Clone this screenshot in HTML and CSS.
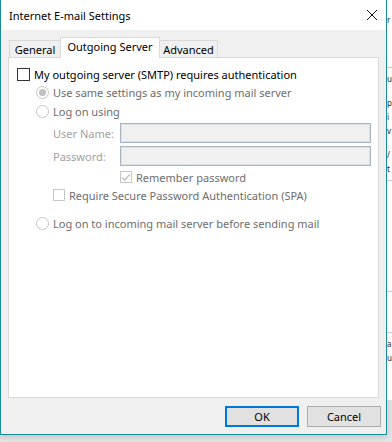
FILE: index.html
```html
<!DOCTYPE html>
<html lang="en">
<head>
  <meta charset="UTF-8">
  <title>Internet E-mail Settings</title>
  <link rel="stylesheet" href="styles.css">
</head>
<body>
  <div class="screen">
    <!-- Dialog window -->
    <div class="dialog">
      <div class="titlebar">
        <span class="title">Internet E-mail Settings</span>
        <svg class="close" width="12" height="12" viewBox="0 0 12 12">
          <path d="M1 1 L11 11 M11 1 L1 11" stroke="#111" stroke-width="1" fill="none"/>
        </svg>
      </div>

      <div class="content">
        <div class="tabs">
          <div class="tab">General</div>
          <div class="tab active">Outgoing Server</div>
          <div class="tab">Advanced</div>
        </div>

        <div class="panel">
          <div class="row row-main">
            <span class="check"></span>
            <span class="label">My outgoing server (SMTP) requires authentication</span>
          </div>
          <div class="row row-radio">
            <span class="radio checked"></span>
            <span class="label disabled">Use same settings as my incoming mail server</span>
          </div>
          <div class="row row-radio">
            <span class="radio"></span>
            <span class="label disabled">Log on using</span>
          </div>
          <div class="field first">
            <span class="field-label">User Name:</span>
            <span class="input"></span>
          </div>
          <div class="field">
            <span class="field-label">Password:</span>
            <span class="input"></span>
          </div>
          <div class="row row-remember">
            <span class="check dim">
              <svg width="11" height="11" viewBox="0 0 11 11">
                <path d="M1.5 5.5 L4.2 8.3 L9.5 2" stroke="#b8b8b8" stroke-width="1.3" fill="none"/>
              </svg>
            </span>
            <span class="label disabled">Remember password</span>
          </div>
          <div class="row row-spa">
            <span class="check dim"></span>
            <span class="label disabled">Require Secure Password Authentication (SPA)</span>
          </div>
          <div class="row row-last">
            <span class="radio"></span>
            <span class="label disabled">Log on to incoming mail server before sending mail</span>
          </div>
        </div>

        <div class="buttons">
          <button class="btn default">OK</button>
          <button class="btn">Cancel</button>
        </div>
      </div>
    </div>

    <!-- Outlook window behind the dialog -->
    <div class="behind">
      <div class="bg-line top">r</div>
      <div class="bg-rule"></div>
      <div class="bg-line">u</div>
      <div class="bg-line gap">p</div>
      <div class="bg-line">i</div>
      <div class="bg-line">v</div>
      <div class="bg-line gap">/</div>
      <div class="bg-line">t</div>
      <div class="bg-rule"></div>
      <div class="bg-rule far"></div>
      <div class="bg-rule near"></div>
      <div class="bg-line">a</div>
      <div class="bg-line">u</div>
    </div>
  </div>
</body>
</html>
```

FILE: styles.css
```css
:root {
  --teal: #1a8b9b;
  --face: #f0f0f0;
  --line: #d9d9d9;
  --text: #000000;
  --muted: #6d6d6d;
  --faint: #a0a0a0;
}

body {
  margin: 0;
  width: 392px;
  height: 442px;
  overflow: hidden;
  font-family: "Noto Sans", "Open Sans", sans-serif;
  font-size: 11px;
  color: var(--text);
  background: #e4e4e4;
}

.screen {
  display: flex;
  height: 442px;
}

.dialog {
  width: 387px;
  height: 435px;
  box-sizing: border-box;
  border: 1px solid var(--teal);
  border-top: none;
  background: var(--face);
  display: flex;
  flex-direction: column;
  flex-shrink: 0;
  box-shadow: 0 2px 6px rgba(0, 0, 0, 0.15);
}

.titlebar {
  height: 30px;
  background: #ffffff;
  display: flex;
  align-items: center;
  justify-content: space-between;
  padding: 0 8px 0 8px;
}

.title {
  font-size: 11px;
}

.close {
  margin-top: -1px;
}

.content {
  padding: 7px 0 0 7px;
}

/* Tabs */
.tabs {
  display: flex;
  height: 20px;
  align-items: flex-end;
  padding-left: 1px;
}

.tab {
  height: 17px;
  box-sizing: border-box;
  border: 1px solid var(--line);
  border-bottom: none;
  background: var(--face);
  text-align: center;
  white-space: nowrap;
  line-height: 17px;
}

.tab:first-child {
  width: 51px;
  border-right: none;
}

.tab.active {
  width: 100px;
  height: 21px;
  background: #ffffff;
  line-height: 18px;
  margin-bottom: -1px;
  position: relative;
  z-index: 1;
}

.tab:last-child {
  width: 58px;
  border-left: none;
}

/* Tab page */
.panel {
  width: 371px;
  height: 341px;
  box-sizing: border-box;
  border: 1px solid var(--line);
  background: #ffffff;
  padding-top: 8px;
}

.row {
  display: flex;
  align-items: center;
}

.row-main {
  height: 17px;
  padding-left: 8px;
}

.row-radio {
  height: 19px;
  padding-left: 27px;
}

.row-remember {
  height: 14px;
  margin-top: 4px;
  padding-left: 111px;
}

.row-spa {
  height: 14px;
  margin-top: 4px;
  padding-left: 44px;
}

.row-last {
  height: 14px;
  margin-top: 14px;
  padding-left: 27px;
}

.label {
  margin-left: 4px;
  white-space: nowrap;
}

.label.disabled {
  color: var(--muted);
}

.check {
  width: 13px;
  height: 13px;
  box-sizing: border-box;
  border: 1px solid #333333;
  background: #ffffff;
  flex-shrink: 0;
  display: flex;
  align-items: center;
  justify-content: center;
}

.check.dim {
  width: 12px;
  height: 12px;
  border-color: #c6c6c6;
}

.radio {
  width: 13px;
  height: 13px;
  box-sizing: border-box;
  border: 1px solid #c6c6c6;
  border-radius: 50%;
  background: #ffffff;
  flex-shrink: 0;
  display: flex;
  align-items: center;
  justify-content: center;
}

.radio.checked::after {
  content: "";
  width: 7px;
  height: 7px;
  border-radius: 50%;
  background: #c0c0c0;
}

.field {
  display: flex;
  align-items: center;
  height: 20px;
  margin-top: 3px;
  padding-left: 44px;
}

.field.first {
  margin-top: 2px;
}

.field-label {
  width: 67px;
  color: var(--faint);
}

.input {
  width: 251px;
  height: 20px;
  box-sizing: border-box;
  border: 1px solid #a7b4c2;
  box-shadow: inset 0 0 0 1px #dbe2e9;
  background: var(--face);
}

/* Buttons */
.buttons {
  display: flex;
  justify-content: flex-end;
  gap: 8px;
  margin-top: 8px;
  padding-right: 5px;
}

.btn {
  width: 74px;
  height: 21px;
  box-sizing: border-box;
  font-family: inherit;
  font-size: 11px;
  color: var(--text);
  background: #e1e1e1;
  border: 1px solid #adadad;
  padding: 0;
}

.btn.default {
  border: 2px solid #0078d7;
}

/* Outlook window behind */
.behind {
  flex: 1;
  height: 400px;
  background: #ffffff;
  font-size: 8px;
  color: #222;
  overflow: hidden;
}

.bg-line {
  height: 14px;
  line-height: 14px;
}

.bg-line.top {
  margin-top: 13px;
  margin-bottom: 40px;
}

.bg-line.gap {
  margin-top: 10px;
}

.bg-rule {
  height: 1px;
  background: #c8c8c8;
  margin: 4px 0;
}

.bg-rule.far {
  margin-top: 110px;
}

.bg-rule.near {
  margin-top: 40px;
}
```
